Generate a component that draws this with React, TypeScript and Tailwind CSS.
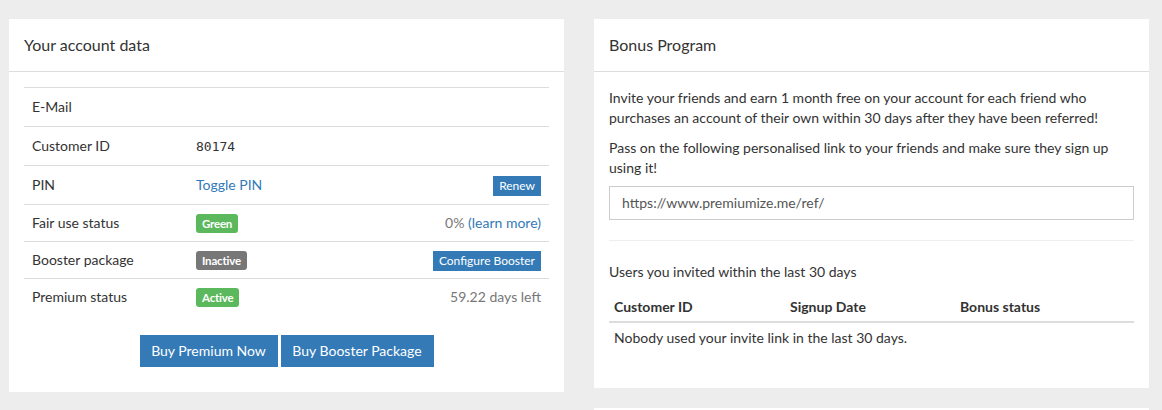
import React from 'react'

const rows = [
  { label: 'E-Mail', h: 'h-[39px]', value: null, right: null },
  {
    label: 'Customer ID',
    h: 'h-[39px]',
    value: <span className="font-['DejaVu_Sans_Mono',monospace] text-[13px] text-[#333]">80174</span>,
    right: null,
  },
  {
    label: 'PIN',
    h: 'h-[39px]',
    value: <span className="text-[#337ab7]">Toggle PIN</span>,
    right: <SmallButton>Renew</SmallButton>,
  },
  {
    label: 'Fair use status',
    h: 'h-[37px]',
    value: <Badge color="bg-[#5cb85c]">Green</Badge>,
    right: (
      <span className="text-[#777]">
        0% <span className="text-[#337ab7]">(learn more)</span>
      </span>
    ),
  },
  {
    label: 'Booster package',
    h: 'h-[37px]',
    value: <Badge color="bg-[#777]">Inactive</Badge>,
    right: <SmallButton>Configure Booster</SmallButton>,
  },
  {
    label: 'Premium status',
    h: 'h-[37px]',
    value: <Badge color="bg-[#5cb85c]">Active</Badge>,
    right: <span className="text-[#777]">59.22 days left</span>,
  },
]

function Badge({ color, children }: { color: string; children: React.ReactNode }) {
  return (
    <span
      className={`inline-flex h-[19px] items-center rounded-[3px] px-[6px] text-[11.5px] font-bold leading-none tracking-[-0.2px] text-white ${color}`}
    >
      {children}
    </span>
  )
}

function SmallButton({ children }: { children: React.ReactNode }) {
  return (
    <span className="inline-flex h-[20px] items-center bg-[#337ab7] px-[6px] text-[12px] leading-none text-white">
      {children}
    </span>
  )
}

function PanelHeading({ title }: { title: string }) {
  return (
    <div className="flex h-[53px] items-center border-b border-[#ddd] px-[15px] text-[16px] text-[#333]">
      {title}
    </div>
  )
}

export default function App() {
  return (
    <div className="h-screen overflow-hidden bg-[#ededed] font-['Lato',sans-serif] text-[14px] leading-[20px] text-[#333]">
      <div className="flex gap-[30px] pl-[9px] pt-[19px]">
        {/* Account data */}
        <div className="w-[555px]">
          <div className="bg-white">
            <PanelHeading title="Your account data" />
            <div className="px-[15px] pt-[15px] pb-[25px]">
              <div>
                {rows.map((r) => (
                  <div key={r.label} className={`flex items-center border-t border-[#ddd] px-[8px] ${r.h}`}>
                    <div className="w-[164px] shrink-0">{r.label}</div>
                    <div className="flex-1">{r.value}</div>
                    <div className="text-right">{r.right}</div>
                  </div>
                ))}
              </div>
              <div className="mt-[20px] flex justify-center gap-[3px]">
                <button className="h-[32px] w-[138px] bg-[#337ab7] text-[14px] text-white">Buy Premium Now</button>
                <button className="h-[32px] w-[153px] bg-[#337ab7] text-[14px] text-white">Buy Booster Package</button>
              </div>
            </div>
          </div>
        </div>

        {/* Bonus program */}
        <div className="flex w-[555px] flex-col gap-[20px]">
          <div className="bg-white">
            <PanelHeading title="Bonus Program" />
            <div className="px-[15px] pt-[16px] pb-[15px]">
              <p>
                Invite your friends and earn 1 month free on your account for each friend who purchases an account of
                their own within 30 days after they have been referred!
              </p>
              <p className="mt-[10px]">
                Pass on the following personalised link to your friends and make sure they sign up using it!
              </p>
              <div className="mt-[8px] flex h-[34px] items-center border border-[#ccc] px-[12px] text-[#555]">
                https://www.premiumize.me/ref/
              </div>
              <div className="mt-[20px] border-t border-[#eee]" />
              <p className="mt-[21px]">Users you invited within the last 30 days</p>
              <div className="mt-[10px]">
                <div className="flex h-[31px] items-center border-b-2 border-[#ddd] font-bold">
                  <div className="w-[176px] pl-[5px]">Customer ID</div>
                  <div className="w-[170px] pl-[5px]">Signup Date</div>
                  <div className="flex-1 pl-[5px]">Bonus status</div>
                </div>
                <div className="flex h-[30px] items-center pl-[5px]">Nobody used your invite link in the last 30 days.</div>
              </div>
              <div className="h-[20px]" />
            </div>
          </div>
          <div className="h-[40px] shrink-0 bg-white" />
        </div>
      </div>
    </div>
  )
}
